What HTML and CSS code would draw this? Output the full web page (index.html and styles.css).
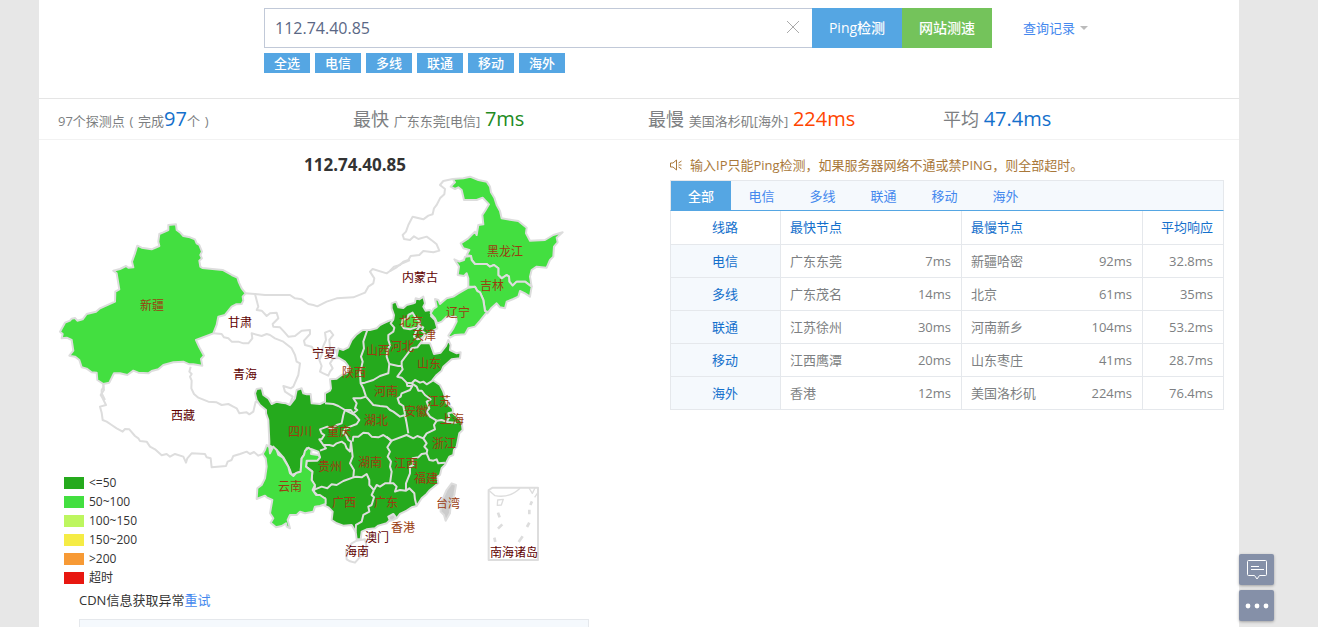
FILE: index.html
```html
<!DOCTYPE html>
<html lang="zh-CN">
<head>
    <meta charset="UTF-8">
    <meta name="viewport" content="width=device-width, initial-scale=1">
    <title>Ping检测 112.74.40.85</title>
    <link rel="stylesheet" href="styles.css">
</head>
<body>
    <main class="wrap">
        <form class="search">
            <div class="search-row">
                <div class="search-box">
                    <input type="text" id="host" value="112.74.40.85" aria-label="IP或域名">
                    <button type="reset" class="clear" aria-label="清空">
                        <svg width="14" height="14" viewBox="0 0 14 14"><path d="M1 1l12 12M13 1L1 13" stroke="#aaa" fill="none"/></svg>
                    </button>
                </div>
                <button type="button" class="btn btn-blue">Ping检测</button>
                <button type="button" class="btn btn-green">网站测速</button>
                <a href="#" class="history">查询记录<span class="caret"></span></a>
            </div>
            <div class="lines">
                <button type="button">全选</button>
                <button type="button">电信</button>
                <button type="button">多线</button>
                <button type="button">联通</button>
                <button type="button">移动</button>
                <button type="button">海外</button>
            </div>
        </form>

        <div class="stats">
            <div><small>97个探测点</small> <small>(</small> <small>完成</small><b class="blue">97</b><small>个</small> <small>)</small></div>
            <div>最快 <small>广东东莞[电信]</small> <b class="green">7ms</b></div>
            <div>最慢 <small>美国洛杉矶[海外]</small> <b class="red">224ms</b></div>
            <div>平均 <b class="blue">47.4ms</b></div>
        </div>

        <div class="content">
            <section class="left">
                <svg class="map" viewBox="39 140 600 448" role="img" aria-label="全国响应时间">
                    <text class="map-title" x="355" y="171">112.74.40.85</text>

                    <!-- 西藏 / 青海 -->
                    <g class="empty" transform="translate(90 350) scale(.3333)">
                        <path d="M40 103L42 120 32 135 38 145 48 165 30 170 35 188 38 210 50 215 65 225 80 235 98 245 105 237 118 238 135 258 145 265 150 273 170 275 180 290 195 298 215 316 230 312 240 320 255 312 280 320 288 338 292 325 305 310 345 312 350 322 362 325 365 352 408 348 413 335 425 330 430 318 450 312 470 305 480 312 492 306 505 317 528 308"/>
                        <path d="M302 50L298 65 305 72 300 80 305 92 304 115 312 132 325 143 355 155 380 157 395 165 415 162 430 170 440 175 448 190 470 187 478 193 490 185 497 155 510 160"/>
                    </g>

                    <!-- 内蒙古 -->
                    <g class="empty" transform="translate(390 165) scale(.3333)">
                        <path d="M188 42L160 48 150 60 165 72 163 88 150 100 140 120 132 130 128 148 115 152 100 163 68 155 55 180 48 200 38 210 42 222 60 225 72 214 85 222 110 215 128 228 140 238 148 257 130 262 100 258 88 270 62 273 55 285 40 290 30 300 12 305 0 318"/>
                    </g>

                    <!-- 甘肃 / 宁夏 -->
                    <g class="empty" transform="translate(230 260) scale(.3333)">
                        <path d="M45 100L75 102 105 105 160 105 180 105 195 115 215 118 235 132 250 135 262 139 290 125 320 115 370 112 405 98 415 80 430 70 433 55 420 35 428 27 470 40 480 33 500 22 512 12 540 0"/>
                        <path d="M75 102L85 140 80 150 95 152 110 168 120 160 140 158 145 175 128 192 130 200 150 202 162 215 175 230 195 228 215 212 240 210 240 222 222 242 225 255 245 260 255 275 270 278"/>
                        <path d="M300 212L285 218 288 240 278 262 275 285 268 300 275 318 270 335 280 340 295 347 300 335 308 325 300 310 310 295 325 295 318 270 300 262 298 240 310 225Z"/>
                        <path d="M-50 220L-25 222 -18 232 -5 235 5 245 25 245 40 250 55 250 67 235 65 220 95 228 110 222 120 225 135 235 160 245 185 265 195 285 200 305 210 310 205 345 190 380 182 385 160 378 165 395 188 410 180 432"/>
                    </g>

                    <!-- <=50 -->
                    <g transform="translate(230 260) scale(.3333)">
                        <path class="fast" d="M485 130L498 125 505 142 520 144 530 135 550 130 555 128 557 115 568 118 580 110 585 130 580 140 587 152 600 150 606 160 603 168 615 180 622 205 610 212 590 225 577 232 575 250 600 250 605 262 612 282 632 278 648 258 655 240 662 255 660 270 680 280 692 277 690 295 665 298 640 320 635 332 620 345 608 360 630 375 640 395 645 410 650 430 668 445 670 460 680 470 695 485 698 510 688 520 685 535 680 560 672 570 670 585 658 590 645 615 635 625 630 645 622 650 625 670 600 690 590 702 575 715 560 738 545 742 530 752 510 762 500 775 480 780 470 790 445 797 435 805 410 808 395 815 392 838 380 838 377 815 365 795 340 797 320 790 305 780 308 755 295 742 280 735 285 715 265 708 252 695 255 680 245 660 247 635 228 620 230 602 262 600 270 592 265 575 245 568 230 565 225 580 215 595 212 635 185 645 180 630 170 610 160 592 140 570 122 558 118 570 118 545 115 480 108 460 108 450 90 435 80 420 75 400 80 387 95 385 100 405 115 415 125 432 140 425 155 428 168 430 180 435 195 415 200 390 215 385 220 400 230 403 242 402 245 430 270 432 285 425 285 400 300 392 303 385 300 358 320 356 335 345 350 340 360 325 345 305 320 290 325 265 340 270 355 262 365 240 378 225 395 212 400 210 420 210 440 205 450 195 460 190 475 183 490 178 492 165 485 145Z"/>
                        <g class="border">
                            <path d="M412 210L400 245 402 265 393 290 398 305 390 340 392 370 400 385 408 410"/>
                            <path d="M392 370L405 368 430 360 450 348 475 340 478 312"/>
                            <path d="M490 178L482 190 493 203 490 215 475 225 475 240 480 255 473 270 470 290 478 312"/>
                            <path d="M478 312L505 318 515 318 515 305 530 285 545 265 562 262 575 245"/>
                            <path d="M515 318L518 328 502 350 515 353 530 368 545 370 555 360 570 368 580 365 590 373 608 362"/>
                            <path d="M530 368L532 378 547 378 540 390 515 400 512 410 503 415 508 430 520 438 525 462"/>
                            <path d="M545 370L560 380 565 392 575 392 585 405 602 418 590 425 598 445 590 455 600 470 620 482"/>
                            <path d="M408 410L430 435 450 438 470 440 480 450 490 455 510 470 525 465 530 490 535 520"/>
                            <path d="M408 410L392 415 370 415 380 430 375 445 382 450 370 460 362 450 345 450"/>
                            <path d="M285 430L310 432 325 438 345 450 375 465 388 480 380 492 360 500 342 510"/>
                        </g>
                    </g>
                    <g class="border" transform="translate(240 370) scale(.3333)">
                        <path d="M315 120L310 135 305 160 290 165 275 178 262 170 240 178 245 190 253 195 245 208 238 208 250 225 268 225 280 228 290 220 305 215 315 222 320 235 330 245 333 215 325 210 318 195 310 190 312 180"/>
                        <path d="M250 225L258 235 240 242"/>
                        <path d="M333 215L338 260 330 280 342 300 340 322 310 333 290 345 275 343 262 355 245 350 225 358"/>
                        <path d="M340 322L350 320 365 322 380 312 388 330 388 345 402 360"/>
                        <path d="M338 215L340 200 355 200 370 188 385 190 395 200 415 202 430 195 445 205 455 215"/>
                        <path d="M440 200L455 212 442 232 450 245 443 260 453 275 450 290 455 305 450 340"/>
                        <path d="M402 360L410 345 420 350 435 340 450 340 460 340 470 350 465 365 480 360 498 362 508 355 523 370 525 388 530 408"/>
                        <path d="M402 360L395 375 402 382 395 405 385 410 388 425 370 435 365 455 348 465 347 485"/>
                        <path d="M498 362L498 340 510 310 510 290 520 285 518 265 535 262 545 252 560 250"/>
                        <path d="M455 212L500 195 520 205 532 198 550 205 560 190 585 178 582 165 590 152"/>
                        <path d="M550 205L560 220 553 230 562 240 560 250 568 270 580 272 590 268 595 280 615 278"/>
                        <path d="M590 152L605 150 625 157 650 158M638 127L625 130 628 142 622 152"/>
                    </g>

                    <!-- 50~100 -->
                    <g transform="translate(40 210) scale(.3333)">
                        <path class="good" d="M385 45L408 43 410 60 420 67 430 78 450 82 465 88 470 100 478 105 486 125 481 135 486 145 478 152 481 170 487 174 548 180 575 195 592 203 597 218 605 235 617 250 608 260 610 272 605 282 588 283 575 290 555 315 535 320 530 345 520 370 468 390 478 412 492 437 483 447 487 467 460 463 448 463 430 455 400 457 370 465 355 478 335 483 325 490 295 488 280 482 262 495 240 490 222 490 208 518 190 522 172 510 170 488 155 487 140 476 125 472 118 450 105 440 88 437 100 422 95 390 80 383 65 385 68 372 60 365 75 338 90 332 95 326 105 324 112 332 128 328 140 312 168 305 180 295 225 275 226 245 238 238 230 190 220 182 240 177 258 168 265 173 280 172 276 155 285 130 292 107 305 113 335 118 358 108 355 95 358 72 370 67 385 60Z"/>
                        <path class="line" d="M190 522L190 532 185 540 185 550 195 570"/>
                    </g>
                    <g transform="translate(390 165) scale(.3333)">
                        <path class="good" d="M188 42L220 40 240 35 265 45 290 50 300 65 303 82 313 98 320 120 330 138 335 160 365 165 385 168 410 188 408 205 420 227 465 225 490 210 518 202 500 218 503 232 492 245 490 275 480 285 470 308 440 305 425 315 420 335 425 365 405 350 380 350 368 362 358 350 357 335 350 330 335 340 325 330 325 310 312 300 300 305 290 297 255 297 245 285 243 273 230 270 238 255 220 250 212 235 235 220 255 200 260 210 265 180 280 178 277 150 285 138 297 118 278 98 260 105 222 105 215 75 205 67 195 72 182 65 195 52Z"/>
                        <path class="good" d="M243 273L225 275 222 285 208 290 193 283 207 305 203 330 222 333 230 325 235 340 235 365 255 365 262 378 270 382 280 405 285 438 292 445 305 428 320 415 330 427 345 430 350 410 370 402 385 395 390 378 405 385 420 395 425 365 405 350 380 350 368 362 358 350 357 335 350 330 335 340 325 330 325 310 312 300 300 305 290 297 255 297 245 285Z"/>
                        <path class="good" d="M235 368L255 365 262 378 270 382 280 405 285 438 292 440 270 468 255 485 235 490 225 508 195 510 180 518 175 512 190 490 200 470 198 455 170 455 155 470 142 475 135 460 122 445 130 432 140 425 135 402 145 405 150 417 170 400 190 395 205 385Z"/>
                    </g>
                    <g transform="translate(240 370) scale(.3333)">
                        <path class="good" d="M80 225L88 232 90 250 100 230 110 240 115 255 128 262 145 290 150 310 160 318 170 308 182 305 185 265 192 255 195 242 205 233 215 240 213 252 235 255 240 262 232 272 200 272 198 290 217 305 215 330 225 345 218 360 228 375 240 375 257 387 257 402 240 408 225 410 220 425 195 430 180 425 170 435 150 435 143 450 150 475 140 470 138 460 125 468 108 472 92 458 100 445 90 430 97 390 80 382 75 377 50 387 52 355 65 345 75 325 80 290 77 265 68 252 75 240Z"/>
                    </g>
                    <g transform="translate(330 290) scale(.3333)">
                        <path class="good" d="M218 90L232 85 235 75 248 68 258 85 270 95 268 105 258 112 240 118 222 115 215 105Z"/>
                        <path class="line" d="M270 108L280 112 275 122 285 130 278 145 262 148 252 140 258 125Z"/>
                    </g>

                    <!-- 岛屿 -->
                    <g transform="translate(240 370) scale(.3333)">
                        <path class="empty" d="M318 545L335 520 350 512 375 508 380 530 370 550 345 578 330 574 320 568Z"/>
                        <path class="gray" d="M635 340L648 345 643 375 632 405 630 430 617 452 612 435 602 425 602 400 620 360ZM445 440L460 432 468 442 460 450 450 452Z"/>
                    </g>
                    <g class="sea" transform="translate(400 470) scale(.3333)">
                        <path d="M266 60L278 53H414V270H266Z"/>
                        <path class="coast" d="M268 62L285 77Q330 85 360 55M387 54L397 70 405 54M414 67L404 82M293 90L310 88 304 105 292 106Z"/>
                        <path class="dash" d="M396 94L391 105M388 119V133M388 158L381 171M368 199L356 216M294 128L299 142M307 163L294 176M283 203L286 216"/>
                    </g>

                    <g class="labels dark">
                        <text x="240" y="327">甘肃</text>
                        <text x="245" y="379">青海</text>
                        <text x="183" y="420">西藏</text>
                        <text x="420" y="282">内蒙古</text>
                        <text x="324" y="358">宁夏</text>
                        <text x="377" y="542">澳门</text>
                        <text x="357" y="556">海南</text>
                        <text x="514" y="557">南海诸岛</text>
                    </g>
                    <g class="labels">
                        <text x="152" y="310">新疆</text>
                        <text x="505" y="256">黑龙江</text>
                        <text x="492" y="290">吉林</text>
                        <text x="458" y="317">辽宁</text>
                        <text x="411" y="326">北京</text>
                        <text x="424" y="340">天津</text>
                        <text x="402" y="351">河北</text>
                        <text x="378" y="355">山西</text>
                        <text x="354" y="377">陕西</text>
                        <text x="429" y="368">山东</text>
                        <text x="386" y="396">河南</text>
                        <text x="439" y="406">江苏</text>
                        <text x="416" y="416">安徽</text>
                        <text x="452" y="424">上海</text>
                        <text x="376" y="425">湖北</text>
                        <text x="444" y="448">浙江</text>
                        <text x="300" y="436">四川</text>
                        <text x="339" y="436">重庆</text>
                        <text x="330" y="471">贵州</text>
                        <text x="370" y="467">湖南</text>
                        <text x="406" y="468">江西</text>
                        <text x="426" y="483">福建</text>
                        <text x="290" y="491">云南</text>
                        <text x="344" y="507">广西</text>
                        <text x="386" y="507">广东</text>
                        <text x="403" y="532">香港</text>
                        <text x="448" y="508">台湾</text>
                    </g>
                </svg>

                <ul class="legend">
                    <li><i class="c1"></i>&lt;=50</li>
                    <li><i class="c2"></i>50~100</li>
                    <li><i class="c3"></i>100~150</li>
                    <li><i class="c4"></i>150~200</li>
                    <li><i class="c5"></i>&gt;200</li>
                    <li><i class="c6"></i>超时</li>
                </ul>

                <p class="cdn">CDN信息获取异常<a href="#">重试</a></p>
                <div class="cdn-box"></div>
            </section>

            <section class="right">
                <p class="notice">
                    <svg width="12" height="12" viewBox="0 0 12 12" fill="none" stroke="#a9783a"><path d="M.5 4h2.500l3.500-3v10L3 8H.5zM8.500 4l3-2M8.500 6h3M8.500 8l3 2"/></svg>
                    输入IP只能Ping检测，如果服务器网络不通或禁PING，则全部超时。
                </p>
                <div class="tabs">
                    <button type="button" class="active">全部</button>
                    <button type="button">电信</button>
                    <button type="button">多线</button>
                    <button type="button">联通</button>
                    <button type="button">移动</button>
                    <button type="button">海外</button>
                </div>
                <table>
                    <colgroup><col class="col-line"><col class="col-node"><col class="col-node"><col></colgroup>
                    <thead>
                        <tr><th>线路</th><th>最快节点</th><th>最慢节点</th><th>平均响应</th></tr>
                    </thead>
                    <tbody>
                        <tr><th>电信</th><td><div>广东东莞<span>7ms</span></div></td><td><div>新疆哈密<span>92ms</span></div></td><td>32.8ms</td></tr>
                        <tr><th>多线</th><td><div>广东茂名<span>14ms</span></div></td><td><div>北京<span>61ms</span></div></td><td>35ms</td></tr>
                        <tr><th>联通</th><td><div>江苏徐州<span>30ms</span></div></td><td><div>河南新乡<span>104ms</span></div></td><td>53.2ms</td></tr>
                        <tr><th>移动</th><td><div>江西鹰潭<span>20ms</span></div></td><td><div>山东枣庄<span>41ms</span></div></td><td>28.7ms</td></tr>
                        <tr><th>海外</th><td><div>香港<span>12ms</span></div></td><td><div>美国洛杉矶<span>224ms</span></div></td><td>76.4ms</td></tr>
                    </tbody>
                </table>
            </section>
        </div>
    </main>

    <div class="float-bar">
        <button type="button" aria-label="反馈">
            <svg width="22" height="20" viewBox="0 0 22 20" fill="none" stroke="#fff"><path d="M2.500.5h17q1 0 1 1v13q0 1-1 1h-6l-2.500 3.500-2.500-3.500h-6q-1 0-1-1v-13q0-1 1-1zM5 6.500h8M5 9.500h13"/></svg>
        </button>
        <button type="button" aria-label="更多">
            <svg width="24" height="6" viewBox="0 0 24 6" fill="#fff"><circle cx="3" cy="3" r="2.400"/><circle cx="12" cy="3" r="2.400"/><circle cx="21" cy="3" r="2.400"/></svg>
        </button>
    </div>
</body>
</html>
```
FILE: styles.css
```css
* {
    box-sizing: border-box;
}

body {
    margin: 0;
    padding-right: 40px;
    background: #e7e7e7;
    color: #333;
    font: 13px/20px "Open Sans", "Noto Sans CJK SC", sans-serif;
}

button {
    border: none;
    padding: 0;
    font: inherit;
    cursor: pointer;
}

a {
    color: #4488ee;
    text-decoration: none;
}

.wrap {
    max-width: 1200px;
    min-height: 100vh;
    margin: 0 auto;
    background: #fff;
}

/* 搜索 */
.search {
    padding: 8px 0 25px 225px;
}

.search-row {
    display: flex;
    align-items: center;
}

.search-box {
    position: relative;
    flex: 0 1 548px;
}

.search-box input {
    display: block;
    width: 100%;
    height: 40px;
    padding: 0 40px 0 10px;
    border: 1px solid #c1c9d8;
    border-right: none;
    color: #5a6785;
    font: inherit;
    font-size: 16px;
}

.clear {
    position: absolute;
    top: 12px;
    right: 12px;
    width: 14px;
    height: 14px;
    background: none;
}

.clear svg {
    display: block;
}

.btn {
    width: 90px;
    height: 40px;
    color: #fff;
    font-size: 14px;
    font-weight: 500;
}

.btn-blue {
    background: #55a6e3;
}

.btn-green {
    background: #74c35b;
}

.history {
    display: flex;
    align-items: center;
    gap: 5px;
    margin-left: 31px;
}

.caret {
    border: 4px solid transparent;
    border-top-color: #bbb;
    border-bottom: none;
}

.lines {
    display: flex;
    gap: 5px;
    margin-top: 5px;
}

.lines button {
    width: 46px;
    height: 20px;
    background: #55a6e3;
    color: #fff;
    font-weight: 500;
}

/* 统计 */
.stats {
    display: grid;
    grid-template-columns: repeat(4, 295px);
    padding-left: 19px;
    border-top: 1px solid #e5e5e5;
    border-bottom: 1px solid #f2f2f2;
    color: #7d7f82;
    font-size: 18px;
    line-height: 40px;
    white-space: nowrap;
}

.stats div {
    height: 40px;
}

.stats small {
    font-size: 13px;
}

.stats b {
    font-size: 20px;
    font-weight: normal;
}

.blue {
    color: #1470cc;
}

.green {
    color: #228b22;
}

.red {
    color: #ff4500;
}

.content {
    display: grid;
    grid-template-columns: 600px 1fr;
}

/* 地图 */
.left {
    position: relative;
}

.map {
    display: block;
    width: 100%;
}

.map path {
    stroke: #ddd;
    stroke-width: 6;
    stroke-linejoin: round;
}

.empty,
.line,
.border,
.sea {
    fill: none;
}

.fast {
    fill: #25aa1d;
}

.good {
    fill: #43df40;
}

.gray {
    fill: #ccc;
}

.map .coast {
    stroke-width: 4;
}

.map .dash {
    stroke-width: 8;
}

.map-title {
    fill: #333;
    font-size: 17px;
    font-weight: bold;
    text-anchor: middle;
}

.labels {
    fill: #9a3d10;
    font-size: 12px;
    text-anchor: middle;
}

.labels.dark {
    fill: #600000;
}

.legend {
    position: absolute;
    top: 333px;
    left: 25px;
    margin: 0;
    padding: 0;
    list-style: none;
    font-size: 12px;
    line-height: 19px;
}

.legend li {
    display: flex;
    align-items: center;
    gap: 5px;
    height: 19px;
}

.legend i {
    width: 20px;
    height: 12px;
}

.c1 { background: #25aa1d; }
.c2 { background: #43df40; }
.c3 { background: #bdf65f; }
.c4 { background: #f5ec45; }
.c5 { background: #f79a35; }
.c6 { background: #e81710; }

.cdn {
    margin: 2px 0 9px 40px;
}

.cdn-box {
    width: 510px;
    min-height: 8px;
    margin-left: 40px;
    border: 1px solid #e5e8ec;
    border-bottom: none;
    background: #f5f9fd;
}

/* 结果 */
.right {
    padding: 15px 15px 0 31px;
}

.notice {
    display: flex;
    align-items: center;
    gap: 8px;
    margin: 0 0 5px;
    color: #a9783a;
    white-space: nowrap;
}

.tabs {
    display: flex;
    border: 1px solid #e5e8ec;
    border-bottom-color: #55a6e3;
    background: #f5f9fd;
}

.tabs button {
    width: 61px;
    height: 29px;
    background: none;
    color: #4488ee;
}

.tabs .active {
    width: 60px;
    background: #55a6e3;
    color: #fff;
    font-weight: 500;
}

table {
    width: 100%;
    border-collapse: collapse;
    table-layout: fixed;
    color: #7d7f82;
}

.col-line {
    width: 110px;
}

.col-node {
    width: 181px;
}

th,
td {
    height: 33px;
    padding: 0 10px 0 9px;
    border: 1px solid #e5e8ec;
    text-align: left;
}

thead th {
    border-top: none;
}

th {
    color: #1470cc;
    font-weight: normal;
}

th:first-child {
    text-align: center;
}

tbody th {
    background: #f5f9fd;
}

th:last-child,
td:last-child {
    text-align: right;
}

td div {
    display: flex;
    justify-content: space-between;
}

/* 右侧浮动按钮 */
.float-bar {
    position: fixed;
    right: 44px;
    bottom: 6px;
    display: grid;
    gap: 5px;
}

.float-bar button {
    display: flex;
    align-items: center;
    justify-content: center;
    width: 35px;
    height: 31px;
    border-radius: 2px;
    background: #8590a8;
    box-shadow: 0 1px 3px rgba(0, 0, 0, 0.3);
}
```
